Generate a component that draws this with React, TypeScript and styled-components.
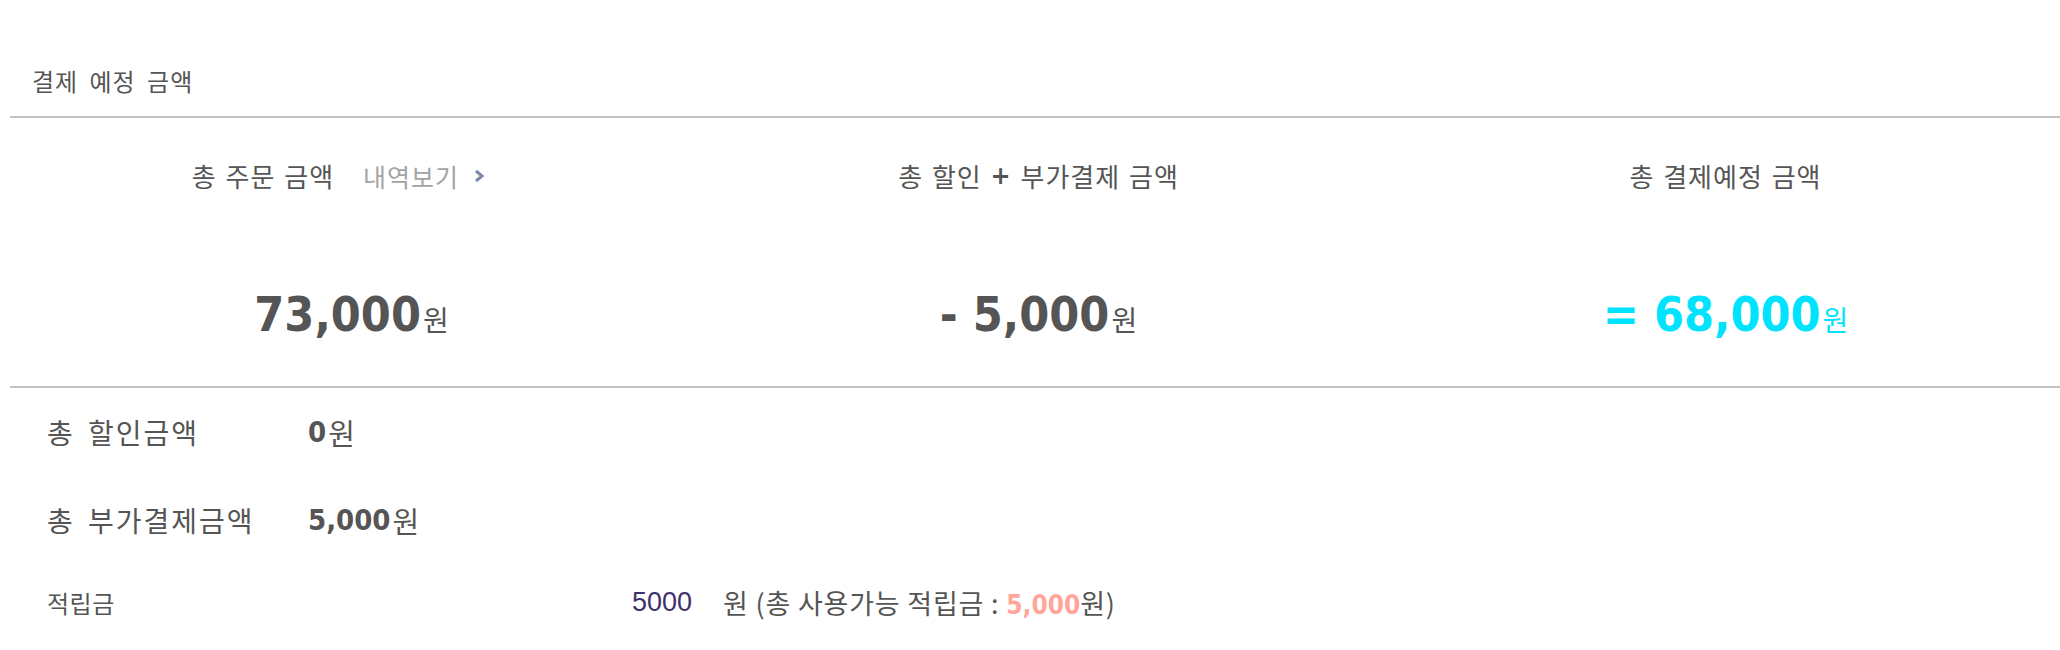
import React from "react";
import styled, { createGlobalStyle } from "styled-components";

const GlobalStyle = createGlobalStyle`
  body {
    margin: 0;
    background: #fff;
    color: #555;
    font-family: "Noto Sans CJK KR", "Noto Sans", sans-serif;
    overflow: hidden;
  }
`;

const Page = styled.div`
  padding-left: 8px;
  width: 2052px;
`;

const Title = styled.h2`
  margin: 0 0 0 2px;
  padding: 64px 0 18px 22px;
  font-size: 24px;
  font-weight: normal;
  letter-spacing: 1px;
  word-spacing: 5px;
  line-height: 34px;
  color: #555;
  border-bottom: 2px solid #c3c3c3;
`;

const SummarySection = styled.div`
  margin-left: 2px;
  border-bottom: 2px solid #c3c3c3;
`;

const SummaryGrid = styled.div`
  display: grid;
  grid-template-columns: repeat(3, 687px);
  margin-left: -2px;
  padding: 40px 0 42px;
`;

const SummaryCell = styled.div`
  display: flex;
  flex-direction: column;
  align-items: center;
`;

const CellHeader = styled.div`
  display: flex;
  align-items: center;
  height: 36px;
  font-size: 26px;
  letter-spacing: 1px;
  word-spacing: 2px;
  line-height: 36px;
  white-space: pre;
`;

const Plus = styled.b`
  font-family: "DejaVu Sans", sans-serif;
  font-size: 24px;
`;

const DetailLink = styled.span`
  display: flex;
  align-items: center;
  margin-left: 29px;
  padding-right: 26px;
  color: #a3a3a3;
  font-size: 25px;
  letter-spacing: 1px;
  gap: 15px;
`;

const Amount = styled.div<{ $accent?: boolean }>`
  margin-top: 90px;
  height: 60px;
  line-height: 60px;
  white-space: nowrap;
  color: ${(p) => (p.$accent ? "#00e3ff" : "#555")};
`;

const Figure = styled.span<{ $size: number }>`
  font-family: "DejaVu Sans Condensed", "DejaVu Sans", sans-serif;
  font-weight: bold;
  font-size: ${(p) => p.$size}px;
  letter-spacing: 0;
`;

const Unit = styled.span<{ $size: number }>`
  font-family: "Noto Sans CJK KR", sans-serif;
  font-size: ${(p) => p.$size}px;
  letter-spacing: 0;
  margin-left: 2px;
`;

const Row = styled.div<{ $compact?: boolean }>`
  display: flex;
  align-items: center;
  height: ${(p) => (p.$compact ? 76 : 88)}px;
  padding-left: 39px;
  font-size: 28px;
  white-space: nowrap;
`;

const Label = styled.div<{ $small?: boolean }>`
  width: 261px;
  flex: none;
  font-size: ${(p) => (p.$small ? 24 : 28)}px;
  letter-spacing: ${(p) => (p.$small ? 0.5 : 2)}px;
  word-spacing: ${(p) => (p.$small ? 0 : 5)}px;
`;

const PointInput = styled.input`
  width: 384px;
  padding: 0;
  border: none;
  background: transparent;
  text-align: right;
  color: #40306c;
  font-family: "Liberation Sans Narrow", "Liberation Sans", sans-serif;
  font-size: 27px;
  outline: none;
`;

const PointNote = styled.span`
  margin-left: 31px;
  font-size: 27px;
  letter-spacing: 0.8px;
`;

const Highlight = styled.span`
  font-family: "DejaVu Sans Condensed", "DejaVu Sans", sans-serif;
  font-weight: bold;
  font-size: 26px;
  letter-spacing: 0;
  color: #ffa69c;
`;

const Chevron = () => (
  <svg width="11" height="14" viewBox="0 0 11 14">
    <polyline points="2,2 8,7 2,12" fill="none" stroke="#7b87a8" strokeWidth="3" />
  </svg>
);

const App = () => (
  <Page>
    <GlobalStyle />
    <Title>결제 예정 금액</Title>
    <SummarySection>
      <SummaryGrid>
        <SummaryCell>
          <CellHeader>
            총 주문 금액
            <DetailLink>
              내역보기
              <Chevron />
            </DetailLink>
          </CellHeader>
          <Amount>
            <Figure $size={48}>73,000</Figure>
            <Unit $size={28}>원</Unit>
          </Amount>
        </SummaryCell>
        <SummaryCell>
          <CellHeader>
            총 할인 <Plus>+</Plus> 부가결제 금액
          </CellHeader>
          <Amount>
            <Figure $size={48}>- 5,000</Figure>
            <Unit $size={28}>원</Unit>
          </Amount>
        </SummaryCell>
        <SummaryCell>
          <CellHeader>총 결제예정 금액</CellHeader>
          <Amount $accent>
            <Figure $size={48}>= 68,000</Figure>
            <Unit $size={28}>원</Unit>
          </Amount>
        </SummaryCell>
      </SummaryGrid>
    </SummarySection>
    <Row>
      <Label>총 할인금액</Label>
      <Figure $size={29}>0</Figure>
      <Unit $size={29}>원</Unit>
    </Row>
    <Row>
      <Label>총 부가결제금액</Label>
      <Figure $size={29}>5,000</Figure>
      <Unit $size={29}>원</Unit>
    </Row>
    <Row $compact>
      <Label $small>적립금</Label>
      <PointInput defaultValue="5000" />
      <PointNote>
        원 (총 사용가능 적립금 : <Highlight>5,000</Highlight>원)
      </PointNote>
    </Row>
  </Page>
);

export default App;
